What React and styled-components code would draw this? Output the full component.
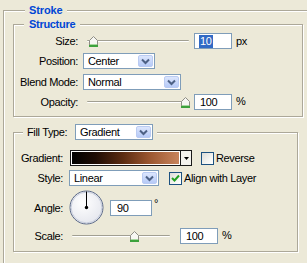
import React from "react";
import styled, { createGlobalStyle } from "styled-components";

const GlobalStyle = createGlobalStyle`
  html, body { margin: 0; padding: 0; background: #ECE9D8; }
  body {
    font-family: "Liberation Sans", Arial, sans-serif;
    font-size: 11px;
    color: #000;
    letter-spacing: -0.35px;
    overflow: hidden;
  }
  #root { width: 307px; height: 263px; overflow: hidden; }
`;

const Page = styled.div`
  box-sizing: border-box;
  width: 307px;
  height: 263px;
  padding: 4px 0 0 3px;
  overflow: hidden;
`;

const Group = styled.fieldset`
  box-sizing: border-box;
  margin: ${(p) => p.$mt || 0}px 0 0 0;
  padding: ${(p) => p.$pad};
  width: ${(p) => p.$w}px;
  min-width: 0;
  height: ${(p) => (p.$h ? `${p.$h}px` : "auto")};
  border: 1px solid #ACA899;
  box-shadow: inset 1px 1px 0 #fff, 1px 1px 0 #fff;
`;

const Legend = styled.legend`
  margin-left: ${(p) => p.$ml}px;
  padding: 0 ${(p) => p.$px}px;
  background: #ECE9D8;
  color: #0046D5;
  font-weight: bold;
  line-height: 13px;
  letter-spacing: ${(p) => p.$ls ?? "-0.1px"};
`;

const ControlLegend = styled.legend`
  margin-left: ${(p) => p.$ml}px;
  padding: 0 ${(p) => p.$px}px;
  background: #ECE9D8;
  display: flex;
  align-items: center;
  gap: 3px;
  height: 16px;
`;

const LegendText = styled.span`
  display: inline-block;
  width: ${(p) => p.$w}px;
`;

const Rows = styled.div`
  display: flex;
  flex-direction: column;
  gap: 4px;
`;

const Row = styled.div`
  display: flex;
  align-items: center;
  gap: 4px;
  height: ${(p) => p.$h || 16}px;
  margin-top: ${(p) => p.$mt || 0}px;
`;

const Label = styled.span`
  box-sizing: border-box;
  flex: none;
  width: ${(p) => p.$w}px;
  padding-right: ${(p) => p.$pr || 1}px;
  text-align: right;
  white-space: nowrap;
`;

const SliderWrap = styled.div`
  position: relative;
  flex: none;
  width: ${(p) => p.$w}px;
  height: 16px;
  display: flex;
  align-items: center;
  margin-left: ${(p) => p.$ml || 0}px;
`;

const Track = styled.div`
  flex: 1;
  box-sizing: border-box;
  height: 2px;
  margin: 0 1px 0 1px;
  border-top: 1px solid #A19F92;
  border-bottom: 1px solid #fff;
  border-radius: 1px;
`;

const ThumbSvg = styled.svg`
  position: absolute;
  top: 3px;
  display: block;
`;

const NumBox = styled.div`
  box-sizing: border-box;
  flex: none;
  width: ${(p) => p.$w}px;
  height: 16px;
  margin-left: ${(p) => p.$ml || 0}px;
  border: 1px solid #7F9DB9;
  background: #fff;
  padding-left: ${(p) => p.$pl ?? 5}px;
  display: flex;
  align-items: center;
`;

const Selected = styled.span`
  background: #316AC5;
  color: #fff;
  padding: 0 1px;
  line-height: 13px;
`;

const Unit = styled.span`
  flex: none;
  margin-left: ${(p) => p.$ml || 0}px;
  margin-bottom: ${(p) => p.$up || 0}px;
  line-height: 12px;
`;

const Select = styled.div`
  box-sizing: border-box;
  flex: none;
  width: ${(p) => p.$w}px;
  height: 16px;
  margin-left: ${(p) => p.$ml || 0}px;
  border: 1px solid #7F9DB9;
  background: #fff;
  display: flex;
  align-items: center;
  padding: 1px 1px 1px 4px;
`;

const SelectText = styled.span`
  flex: 1;
  line-height: 12px;
  white-space: nowrap;
`;

const SelectButton = styled.span`
  box-sizing: border-box;
  flex: none;
  width: 15px;
  height: 12px;
  border: 1px solid #BACBF2;
  border-radius: 2px;
  background: linear-gradient(#DCE6FD, #B6CAF7);
  display: flex;
  align-items: center;
  justify-content: center;
`;

const GradientBox = styled.div`
  box-sizing: border-box;
  flex: none;
  width: 122px;
  height: 16px;
  margin-left: ${(p) => p.$ml || 0}px;
  border: 1px solid #1A1A1A;
  background: #fff;
  display: flex;
`;

const GradientSwatch = styled.div`
  flex: 1;
  margin: 1px;
  background: linear-gradient(to right, #000 0%, #1e0c04 22%, #5c2c12 48%, #9a5630 72%, #c8845c 100%);
`;

const GradientArrow = styled.div`
  flex: none;
  width: 10px;
  border-left: 1px solid #1A1A1A;
  background: #F4F3EE;
  display: flex;
  align-items: center;
  justify-content: center;
`;

const CheckItem = styled.div`
  display: flex;
  align-items: center;
  gap: 2px;
  margin-left: ${(p) => p.$ml || 0}px;
  white-space: nowrap;
`;

const CheckBox = styled.span`
  box-sizing: border-box;
  flex: none;
  width: 13px;
  height: 13px;
  border: 1px solid #1C5180;
  background: linear-gradient(135deg, #DCDCD7 0%, #F4F4F1 60%, #fff 100%);
  display: flex;
  align-items: center;
  justify-content: center;
`;

const Dial = styled.svg`
  flex: none;
  display: block;
`;

function Chevron() {
  return (
    <svg width="9" height="7" viewBox="0 0 9 7">
      <path d="M1 1.5 L4.5 5 L8 1.5" fill="none" stroke="#4D6185" strokeWidth="2" />
    </svg>
  );
}

function Dropdown({ w, ml, children }) {
  return (
    <Select $w={w} $ml={ml}>
      <SelectText>{children}</SelectText>
      <SelectButton>
        <Chevron />
      </SelectButton>
    </Select>
  );
}

function Slider({ w, ml, pct }) {
  const left = Math.round((w - 9) * pct);
  return (
    <SliderWrap $w={w} $ml={ml}>
      <Track />
      <ThumbSvg width="9" height="11" viewBox="0 0 9 11" style={{ left }}>
        <path d="M0.5 4.5 L4.5 0.5 L8.5 4.5 V10.5 H0.5 Z" fill="#F7F7F3" stroke="#8F8E86" />
        <rect x="0" y="9" width="9" height="2" fill="#3DA23D" />
        <rect x="1" y="8" width="7" height="1" fill="#A8D8A0" />
      </ThumbSvg>
    </SliderWrap>
  );
}

function Checkbox({ checked, ml, children }) {
  return (
    <CheckItem $ml={ml}>
      <CheckBox>
        {checked && (
          <svg width="9" height="9" viewBox="0 0 9 9">
            <path d="M1 4 L3.5 6.5 L8 1.5" fill="none" stroke="#21A121" strokeWidth="2" />
          </svg>
        )}
      </CheckBox>
      <span>{children}</span>
    </CheckItem>
  );
}

export default function App() {
  return (
    <>
      <GlobalStyle />
      <Page>
        <Group $w={330} $h={300} $pad="0 0 0 9px">
          <Legend $ml={12} $px={4}>Stroke</Legend>

          <Group $w={290} $mt={1} $pad="2px 0 6px 0">
            <Legend $ml={10} $px={5} $ls="-0.3px">Structure</Legend>
            <Rows>
              <Row>
                <Label $w={65}>Size:</Label>
                <Slider w={104} ml={3} pct={0.036} />
                <NumBox $w={38} $pl={4}>
                  <Selected>10</Selected>
                </NumBox>
                <Unit>px</Unit>
              </Row>
              <Row>
                <Label $w={65}>Position:</Label>
                <Dropdown w={72}>Center</Dropdown>
              </Row>
              <Row $mt={1}>
                <Label $w={65}>Blend Mode:</Label>
                <Dropdown w={98}>Normal</Dropdown>
              </Row>
              <Row>
                <Label $w={65}>Opacity:</Label>
                <Slider w={104} ml={3} pct={1} />
                <NumBox $w={38}>100</NumBox>
                <Unit $up={3}>%</Unit>
              </Row>
            </Rows>
          </Group>

          <Group $w={285} $mt={7} $pad="10px 0 7px 0">
            <ControlLegend $ml={9} $px={4}>
              <LegendText $w={45}>Fill Type:</LegendText>
              <Dropdown w={78}>Gradient</Dropdown>
            </ControlLegend>
            <Rows>
              <Row>
                <Label $w={51} $pr={2}>Gradient:</Label>
                <GradientBox $ml={1}>
                  <GradientSwatch />
                  <GradientArrow>
                    <svg width="5" height="3" viewBox="0 0 5 3">
                      <path d="M0 0 H5 L2.5 3 Z" fill="#000" />
                    </svg>
                  </GradientArrow>
                </GradientBox>
                <Checkbox ml={5}>Reverse</Checkbox>
              </Row>
              <Row>
                <Label $w={51} $pr={2}>Style:</Label>
                <Dropdown w={90}>Linear</Dropdown>
                <Checkbox ml={6} checked>
                  Align with Layer
                </Checkbox>
              </Row>
              <Row $h={35}>
                <Label $w={51} $pr={2}>Angle:</Label>
                <Dial width="35" height="35" viewBox="0 0 35 35">
                  <defs>
                    <radialGradient id="dialFill" cx="40%" cy="35%" r="75%">
                      <stop offset="0" stopColor="#FFFFFF" />
                      <stop offset="1" stopColor="#E2E4EC" />
                    </radialGradient>
                  </defs>
                  <circle cx="17.5" cy="17.5" r="16.5" fill="url(#dialFill)" stroke="#5A6887" strokeWidth="1" />
                  <circle cx="17.5" cy="17.5" r="15.4" fill="none" stroke="#C8CEDD" strokeWidth="1" />
                  <line x1="17.5" y1="17.5" x2="17.5" y2="1.5" stroke="#000" strokeWidth="1" />
                  <circle cx="17.5" cy="17.5" r="1.7" fill="#000" />
                </Dial>
                <NumBox $w={42} $ml={2} $pl={6}>90</NumBox>
                <Unit $ml={-2} $up={10}>°</Unit>
              </Row>
              <Row $mt={-1}>
                <Label $w={51} $pr={2}>Scale:</Label>
                <Slider w={100} ml={2} pct={0.643} />
                <NumBox $w={38} $ml={5}>100</NumBox>
                <Unit $up={3}>%</Unit>
              </Row>
            </Rows>
          </Group>
        </Group>
      </Page>
    </>
  );
}
